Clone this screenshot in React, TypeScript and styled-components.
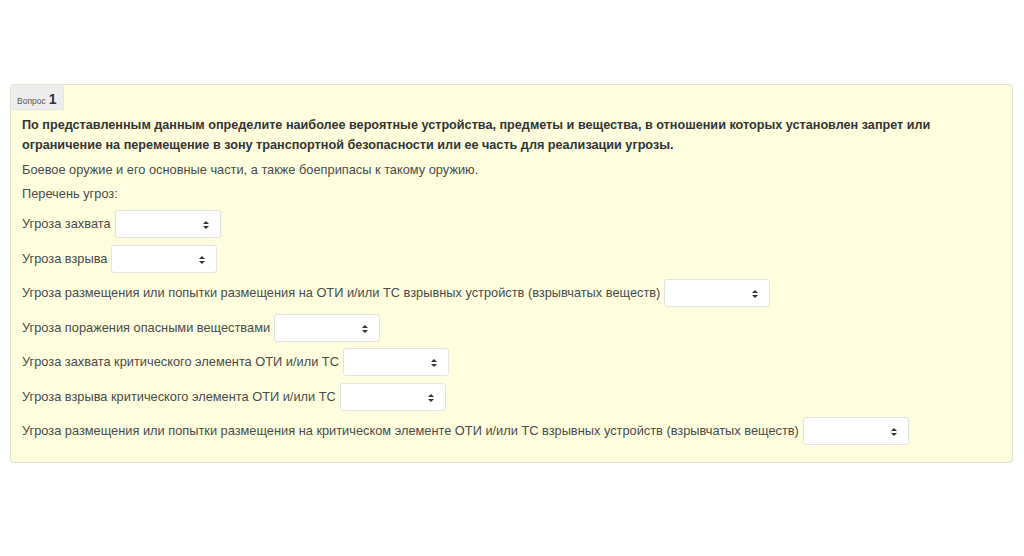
import React from "react";
import styled, { createGlobalStyle } from "styled-components";

const Global = createGlobalStyle`
  html, body { margin: 0; padding: 0; background: #ffffff; }
  body { font-family: "Liberation Sans", Arial, sans-serif; }
`;

const Page = styled.div`
  width: 1024px;
  height: 556px;
  box-sizing: border-box;
  padding: 84px 11px 0 10px;
`;

const Panel = styled.div`
  background: #ffffdf;
  border: 1px solid #e2e2d2;
  border-radius: 4px;
  box-shadow: 0 0 1px rgba(0, 0, 0, 0.05);
`;

const Tab = styled.div`
  display: inline-flex;
  align-items: baseline;
  gap: 3px;
  height: 25px;
  box-sizing: border-box;
  padding: 6px 6px 0 6px;
  background: #ededed;
  border-bottom: 1px solid #e4e4e4;
  border-right: 1px solid #e4e4e4;
  border-top-left-radius: 3px;
  color: #333;
`;

const TabLabel = styled.span`
  font-size: 8.5px;
  color: #555;
`;

const TabNumber = styled.span`
  font-size: 14px;
  font-weight: bold;
`;

const Content = styled.div`
  padding: 6px 11px 17px 11px;
  color: #4a4a4a;
  font-size: 12.8px;
  line-height: 19.5px;
`;

const Question = styled.p`
  margin: 0 0 4.5px 0;
  font-weight: bold;
  font-size: 12.65px;
  color: #333;
`;

const Para = styled.p`
  margin: 0 0 4.5px 0;
`;

const Rows = styled.div`
  display: flex;
  flex-direction: column;
  gap: 6.5px;
  margin-top: 7px;
`;

const Row = styled.div`
  display: flex;
  align-items: center;
  gap: 4px;
  height: 28px;
`;

const SelectBox = styled.div`
  position: relative;
  width: 106px;
  height: 28px;
  box-sizing: border-box;
  background: #ffffff;
  border: 1px solid #e3e3e3;
  border-radius: 3px;
`;

const Arrows = styled.svg`
  position: absolute;
  right: 11px;
  top: 10px;
`;

const Select = () => (
  <SelectBox>
    <Arrows width="6" height="8" viewBox="0 0 6 8">
      <path d="M3 0 L6 3 L0 3 Z" fill="#333" />
      <path d="M3 8 L6 5 L0 5 Z" fill="#333" />
    </Arrows>
  </SelectBox>
);

const threats = [
  "Угроза захвата",
  "Угроза взрыва",
  "Угроза размещения или попытки размещения на ОТИ и/или ТС взрывных устройств (взрывчатых веществ)",
  "Угроза поражения опасными веществами",
  "Угроза захвата критического элемента ОТИ и/или ТС",
  "Угроза взрыва критического элемента ОТИ и/или ТС",
  "Угроза размещения или попытки размещения на критическом элементе ОТИ и/или ТС взрывных устройств (взрывчатых веществ)",
];

export default function App() {
  return (
    <>
      <Global />
      <Page>
        <Panel>
          <Tab>
            <TabLabel>Вопрос</TabLabel>
            <TabNumber>1</TabNumber>
          </Tab>
          <Content>
            <Question>
              По представленным данным определите наиболее вероятные устройства, предметы и вещества, в отношении которых установлен запрет или ограничение на перемещение в зону транспортной безопасности или ее часть для реализации угрозы.
            </Question>
            <Para>Боевое оружие и его основные части, а также боеприпасы к такому оружию.</Para>
            <Para>Перечень угроз:</Para>
            <Rows>
              {threats.map((t) => (
                <Row key={t}>
                  <span>{t}</span>
                  <Select />
                </Row>
              ))}
            </Rows>
          </Content>
        </Panel>
      </Page>
    </>
  );
}
